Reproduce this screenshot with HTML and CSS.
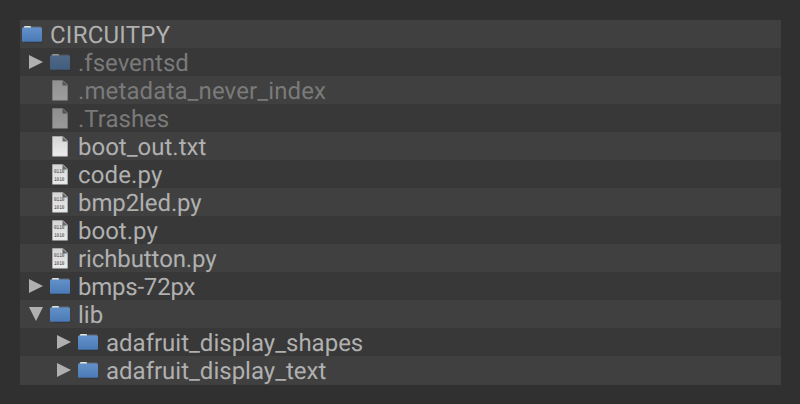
FILE: index.html
```html
<!DOCTYPE html>
<html lang="en">
<head>
<meta charset="utf-8">
<title>CIRCUITPY</title>
<link rel="stylesheet" href="styles.css">
</head>
<body>
<svg class="defs" width="0" height="0">
  <defs>
    <linearGradient id="blue" x1="0" y1="0" x2="0" y2="1"><stop offset="0" stop-color="#6390c8"/><stop offset="1" stop-color="#4a7ab6"/></linearGradient>
    <linearGradient id="paper" x1="0" y1="0" x2="0" y2="1"><stop offset="0" stop-color="#d4d4d4"/><stop offset="1" stop-color="#ececec"/></linearGradient>
    <symbol id="folder" viewBox="0 0 21 17"><path d="M2 15H20.5V16.5H3Z" fill="#2b3038"/><path d="M1 3V1.5Q1 .6 2 .6H19V4H1Z" fill="#60666f"/><path d="M2 2V.5Q2 0 3 0H8Q9 0 9 1V2Z" fill="#e4e4df"/><rect y="1.6" width="20" height="14.2" rx="1" fill="url(#blue)"/></symbol>
    <symbol id="file" viewBox="0 0 16 21"><path d="M.5 .5H10.5L15.5 5.5V20.3H.5Z" fill="url(#paper)" stroke="#bbb" stroke-width=".6"/><path d="M10.5 .5V5.5H15.5Z" fill="#666"/><path d="M11 .5L15.5 5" stroke="#c8c8c8" stroke-width=".7"/></symbol>
    <symbol id="code" viewBox="0 0 16 21"><use href="#file" width="16" height="21"/><text x="2" y="9.3" textLength="10.5" lengthAdjust="spacingAndGlyphs" class="bits">0110</text><text x="2" y="17.3" textLength="10.5" lengthAdjust="spacingAndGlyphs" class="bits">1010</text></symbol>
    <symbol id="right" viewBox="0 0 14 14"><path d="M0 0L14 7L0 14Z"/></symbol>
    <symbol id="down" viewBox="0 0 14 14"><path d="M0 0H14L7 14Z"/></symbol>
  </defs>
</svg>
<main class="tree">
  <div class="row root"><svg class="folder"><use href="#folder"/></svg><span>CIRCUITPY</span></div>
  <div class="row dim"><svg class="arrow"><use href="#right"/></svg><svg class="folder"><use href="#folder"/></svg><span>.fseventsd</span></div>
  <div class="row leaf dim"><svg class="file"><use href="#file"/></svg><span class="loose">.metadata_never_index</span></div>
  <div class="row leaf dim"><svg class="file"><use href="#file"/></svg><span>.Trashes</span></div>
  <div class="row leaf"><svg class="file"><use href="#file"/></svg><span>boot_out.txt</span></div>
  <div class="row leaf"><svg class="file"><use href="#code"/></svg><span class="loose">code.py</span></div>
  <div class="row leaf"><svg class="file"><use href="#code"/></svg><span class="tight">bmp2led.py</span></div>
  <div class="row leaf"><svg class="file"><use href="#code"/></svg><span>boot.py</span></div>
  <div class="row leaf"><svg class="file"><use href="#code"/></svg><span class="tight">richbutton.py</span></div>
  <div class="row"><svg class="arrow"><use href="#right"/></svg><svg class="folder"><use href="#folder"/></svg><span class="tighter">bmps-72px</span></div>
  <div class="row"><svg class="arrow"><use href="#down"/></svg><svg class="folder"><use href="#folder"/></svg><span>lib</span></div>
  <div class="row nested"><svg class="arrow"><use href="#right"/></svg><svg class="folder"><use href="#folder"/></svg><span>adafruit_display_shapes</span></div>
  <div class="row nested"><svg class="arrow"><use href="#right"/></svg><svg class="folder"><use href="#folder"/></svg><span>adafruit_display_text</span></div>
</main>
</body>
</html>
```
FILE: styles.css
```css
body { margin: 0; padding: 20px; background: #303030; font-family: Roboto, sans-serif; font-size: 24px; color: #b0b0b0; text-rendering: geometricPrecision; }
.defs { display: block; }
.tree { width: 761px; }
.row { display: flex; align-items: flex-start; height: 28px; padding-left: 9px; background: #383838; line-height: 30px; white-space: nowrap; }
.row:nth-child(odd) { background: #404040; }
.row:last-child { height: 29px; }
.root { padding-left: 2px; letter-spacing: .24px; }
.leaf { padding-left: 32px; }
.nested { padding-left: 37px; }
.loose { letter-spacing: .12px; }
.tight { letter-spacing: -.1px; }
.tighter { letter-spacing: -.23px; }
.arrow { width: 14px; height: 14px; margin: 7px 7px 0 0; fill: #b0b0b0; }
.folder { width: 21px; height: 17px; margin: 6px 7px 0 0; }
.file { width: 16px; height: 21px; margin: 4px 10px 0 0; }
.dim .folder, .dim .file { opacity: .55; }
.dim span { color: #7a7a7a; }
.bits { font: 5.8px "Liberation Mono", monospace; letter-spacing: 0; fill: #333; }
```
